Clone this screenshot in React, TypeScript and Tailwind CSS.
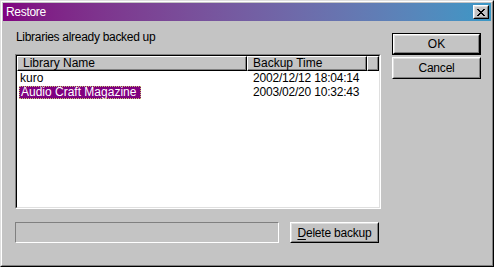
import { ReactNode } from 'react';

const face = 'bg-[#c4c4c4]';

const Raised = ({ children, className = '' }: { children: ReactNode; className?: string }) => (
  <div className={`border border-t-white border-l-white border-b-black border-r-black ${className}`}>
    <div className="h-full w-full border border-t-[#dfdfdf] border-l-[#dfdfdf] border-b-[#808080] border-r-[#808080] flex items-center justify-center">
      {children}
    </div>
  </div>
);

const HeaderCell = ({ label, className = '' }: { label?: string; className?: string }) => (
  <div className={`h-full border border-t-white border-l-white border-b-black border-r-black ${className}`}>
    <div className="h-full border-b border-r border-b-[#808080] border-r-[#808080] pl-[5px] leading-[12px] text-[12px] text-black whitespace-nowrap">
      {label}
    </div>
  </div>
);

const rows = [
  { name: 'kuro', time: '2002/12/12 18:04:14', selected: false },
  { name: 'Audio Craft Magazine', time: '2003/02/20 10:32:43', selected: true },
];

export default function App() {
  return (
    <div
      className="w-[494px] h-[267px] border border-t-[#dfdfdf] border-l-[#dfdfdf] border-b-black border-r-black"
      style={{ fontFamily: '"Liberation Sans", Arial, sans-serif' }}
    >
      <div className={`h-full w-full border border-t-white border-l-white border-b-[#808080] border-r-[#808080] p-px ${face} flex flex-col`}>
        {/* title bar */}
        <div className="h-[18px] flex items-center justify-between bg-gradient-to-r from-[#800080] to-[#3a98c6] pl-[3px] pr-[2px]">
          <span className="text-white text-[12px] leading-[14px] tracking-[-0.3px]">Restore</span>
          <Raised className={`w-[16px] h-[14px] ${face}`}>
            <svg width="8" height="7" viewBox="0 0 8 7" shapeRendering="crispEdges">
              <path d="M0 0h2v1H0zM6 0h2v1H6zM1 1h2v1H1zM5 1h2v1H5zM2 2h4v1H2zM3 3h2v1H3zM2 4h4v1H2zM1 5h2v1H1zM5 5h2v1H5zM0 6h2v1H0zM6 6h2v1H6z" fill="#000" />
            </svg>
          </Raised>
        </div>

        <div className="flex flex-1 pl-[12px]">
          {/* left column */}
          <div className="w-[366px] flex flex-col">
            <div className="mt-[9px] h-[14px] text-[12px] leading-[14px] text-black pl-px tracking-[-0.3px]">Libraries already backed up</div>

            <div className="mt-[10px] h-[155px] border border-t-[#808080] border-l-[#808080] border-b-white border-r-white">
              <div className="h-full border border-t-black border-l-black border-b-[#dfdfdf] border-r-[#dfdfdf] bg-white flex flex-col">
                <div className={`h-[15px] flex ${face}`}>
                  <HeaderCell label="Library Name" className="w-[230px]" />
                  <HeaderCell label="Backup Time" className="w-[120px]" />
                  <HeaderCell className="flex-1" />
                </div>
                {rows.map((r) => (
                  <div key={r.name} className="h-[13px] mt-px flex text-[12px] leading-[13px]">
                    <div className="w-[230px] pl-[2px]">
                      <span
                        className={
                          r.selected
                            ? 'inline-block pl-[2px] pr-[5px] bg-[#800080] text-white outline outline-1 outline-dotted outline-[#c8c870] -outline-offset-1'
                            : 'inline-block px-[1px] text-black'
                        }
                      >
                        {r.name}
                      </span>
                    </div>
                    <div className="pl-[6px] text-black whitespace-nowrap tracking-[-0.2px]">{r.time}</div>
                  </div>
                ))}
              </div>
            </div>

            <div className="mt-[13px] flex gap-[11px]">
              <div className="w-[264px] h-[21px] border border-t-[#808080] border-l-[#808080] border-b-white border-r-white" />
              <Raised className="w-[89px] h-[21px]">
                <span className="text-[12px] leading-[14px] text-black tracking-[-0.2px]">
                  <span className="underline underline-offset-2">D</span>elete backup
                </span>
              </Raised>
            </div>
          </div>

          {/* right column */}
          <div className="ml-[11px] mt-[12px] w-[89px] flex flex-col gap-[2px]">
            <div className="h-[22px] border border-black">
              <Raised className="h-full">
                <span className="text-[12px] leading-[14px] text-black">OK</span>
              </Raised>
            </div>
            <Raised className="h-[22px]">
              <span className="text-[12px] leading-[14px] text-black tracking-[-0.2px]">Cancel</span>
            </Raised>
          </div>
        </div>
      </div>
    </div>
  );
}
